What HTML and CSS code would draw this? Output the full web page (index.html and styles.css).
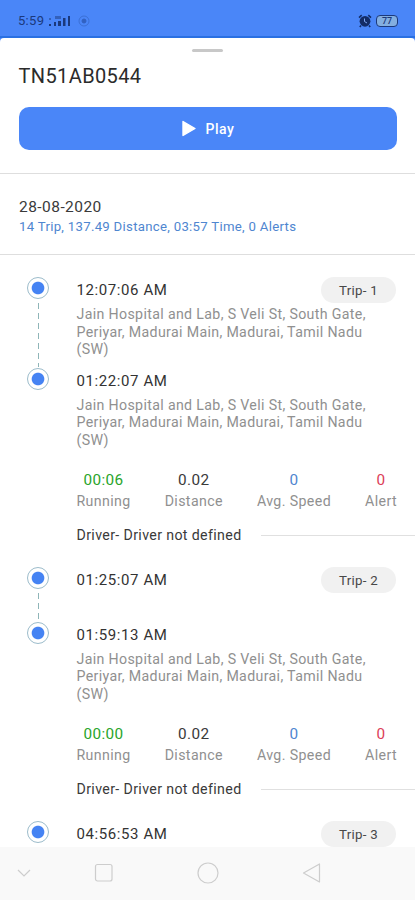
FILE: index.html
```html
<!DOCTYPE html>
<html lang="en">
<head>
<meta charset="utf-8">
<title>Trips</title>
<link rel="stylesheet" href="styles.css">
</head>
<body>
<div class="screen">
  <header class="status">
    <span class="clock">5:59</span>
    <svg class="signal" width="24" height="14" viewBox="0 0 24 14" fill="#1b397c">
      <rect x="1" y="4" width="2" height="2" opacity=".5"/><rect x="1" y="10" width="2" height="2"/>
      <rect x="6" y="8" width="2" height="4"/><rect x="7" y="2" width="6" height="3" opacity=".5"/>
      <rect x="10" y="7" width="3" height="5"/><rect x="15" y="4" width="2.5" height="8"/>
      <rect x="20" y="2" width="2" height="10"/>
    </svg>
    <svg class="ring" width="12" height="12" viewBox="0 0 12 12" fill="none" stroke="#2c59b4">
      <circle cx="6" cy="6" r="5" opacity=".5"/><circle cx="6" cy="6" r="2" fill="#2c59b4" opacity=".8"/>
    </svg>
    <svg class="alarm" width="14" height="14" viewBox="0 0 14 14">
      <circle cx="7" cy="7.3" r="5.4" fill="#132c67"/>
      <path d="M1 3.6 3.7 1.2M13 3.6 10.3 1.2M3 11.5 1.8 13M11 11.5 12.2 13" stroke="#132c67" stroke-width="1.6"/>
      <path d="M6.500 4.500V7.500L9 9" fill="none" stroke="#7fa6f2"/>
    </svg>
    <span class="battery">77</span>
  </header>
  <main class="sheet">
    <div class="handle"></div>
    <h1 class="vehicle">TN51AB0544</h1>
    <button class="play">
      <svg width="14" height="17" viewBox="0 0 14 17"><path d="M1 1.500 13 8.500 1 15.500Z" fill="#fff" stroke="#fff" stroke-width="1.400" stroke-linejoin="round"/></svg>
      <span>Play</span>
    </button>
    <section class="summary">
      <div class="date">28-08-2020</div>
      <div class="totals">14 Trip, 137.49 Distance, 03:57 Time, 0 Alerts</div>
    </section>
    <section class="trips">
      <article class="trip">
        <div class="stop start">
          <div class="rail"><i class="dot"></i><i class="dash"></i></div>
          <div class="info">
            <div class="head"><span class="time">12:07:06 AM</span><span class="pill">Trip- 1</span></div>
            <p class="address">Jain Hospital and Lab, S Veli St, South Gate,<br>Periyar, Madurai Main, Madurai, Tamil Nadu<br>(SW)</p>
          </div>
        </div>
        <div class="stop end">
          <div class="rail"><i class="dot"></i></div>
          <div class="info">
            <div class="head"><span class="time">01:22:07 AM</span></div>
            <p class="address">Jain Hospital and Lab, S Veli St, South Gate,<br>Periyar, Madurai Main, Madurai, Tamil Nadu<br>(SW)</p>
            <div class="stats">
              <div class="stat"><b class="green">00:06</b><span>Running</span></div>
              <div class="stat"><b>0.02</b><span>Distance</span></div>
              <div class="stat"><b class="blue">0</b><span>Avg. Speed</span></div>
              <div class="stat"><b class="red">0</b><span>Alert</span></div>
            </div>
            <div class="driver"><span>Driver- Driver not defined</span></div>
          </div>
        </div>
      </article>
      <article class="trip">
        <div class="stop start short">
          <div class="rail"><i class="dot"></i><i class="dash"></i></div>
          <div class="info">
            <div class="head"><span class="time">01:25:07 AM</span><span class="pill">Trip- 2</span></div>
          </div>
        </div>
        <div class="stop end">
          <div class="rail"><i class="dot"></i></div>
          <div class="info">
            <div class="head"><span class="time">01:59:13 AM</span></div>
            <p class="address">Jain Hospital and Lab, S Veli St, South Gate,<br>Periyar, Madurai Main, Madurai, Tamil Nadu<br>(SW)</p>
            <div class="stats">
              <div class="stat"><b class="green">00:00</b><span>Running</span></div>
              <div class="stat"><b>0.02</b><span>Distance</span></div>
              <div class="stat"><b class="blue">0</b><span>Avg. Speed</span></div>
              <div class="stat"><b class="red">0</b><span>Alert</span></div>
            </div>
            <div class="driver"><span>Driver- Driver not defined</span></div>
          </div>
        </div>
      </article>
      <article class="trip">
        <div class="stop">
          <div class="rail"><i class="dot"></i></div>
          <div class="info">
            <div class="head"><span class="time">04:56:53 AM</span><span class="pill">Trip- 3</span></div>
          </div>
        </div>
      </article>
    </section>
  </main>
  <nav class="navbar">
    <svg width="14" height="10" viewBox="0 0 14 10"><path d="M1 2 7 8 13 2"/></svg>
    <svg width="20" height="20" viewBox="0 0 20 20"><rect x="1.500" y="1.500" width="16.500" height="16.500" rx="2"/></svg>
    <svg width="22" height="22" viewBox="0 0 22 22"><circle cx="11" cy="11" r="10"/></svg>
    <svg width="20" height="22" viewBox="0 0 20 22"><path d="M17.500 2V20L1.500 11Z" stroke-linejoin="round"/></svg>
  </nav>
</div>
</body>
</html>
```
FILE: styles.css
```css
* { box-sizing: border-box; }
body { margin: 0; font-family: Roboto, sans-serif; background: #4a86f8; }
.screen { width: 415px; height: 900px; display: flex; flex-direction: column; overflow: hidden; }

.status {
  flex: none; height: 38px; padding: 5px 17px 0 18px;
  display: flex; align-items: center;
  background: #4a86f8; border-bottom: 2px solid #2a70e2; color: #1b397c;
}
.clock { width: 30px; font-size: 13px; letter-spacing: .3px; }
.ring { margin-left: 6px; }
.alarm { margin-left: auto; margin-right: 4px; }
.battery {
  width: 22px; height: 12px; border: 1.5px solid #1b397c; border-radius: 4px;
  background: #83aee0; font-size: 9px; line-height: 10px; text-align: center; font-weight: 500;
}

.sheet { flex: 1; min-height: 0; overflow: hidden; background: #fff; border-radius: 4px 4px 0 0; }
.handle { width: 31px; height: 3px; margin: 11px auto 0; background: #c8c8c8; border-radius: 2px; }
.vehicle { margin: 12px 0 0 18.5px; font-size: 20px; line-height: 24px; font-weight: 400; letter-spacing: .38px; color: #2b2b2b; }
.play {
  width: 378px; height: 43px; margin: 19px 0 0 19px; padding: 0;
  display: flex; align-items: center; justify-content: center; gap: 10px;
  border: 0; border-radius: 10px; background: #4a86f8; color: #fff;
  font: 500 14px/20px Roboto, sans-serif; letter-spacing: .5px;
}
.summary { height: 82px; margin-top: 23px; padding: 23px 19px 0; border-top: 1px solid #dedede; border-bottom: 1px solid #dedede; }
.date { font-size: 15.5px; line-height: 20px; letter-spacing: .45px; color: #3a3a3a; }
.totals { font-size: 13.2px; line-height: 20px; letter-spacing: .29px; color: #4f86d0; }

.trips { padding-top: 22px; }
.stop { display: flex; }
.rail { width: 76.5px; flex: none; display: flex; flex-direction: column; align-items: center; }
.start { height: 90.5px; }
.start.short { height: 55px; }
.end { height: 199px; }
.dot {
  width: 22px; height: 22px; flex: none; border: 1px solid #9cbccb; border-radius: 50%;
  background: radial-gradient(circle, #4583f3 5.8px, #fff 6.8px);
}
.dash { flex: 1; width: 1px; margin: 4px 0 1px; background: repeating-linear-gradient(#8fb5b8 0 6px, transparent 6px 10px); }
.info { flex: 1; }
.head { height: 26px; padding-right: 19px; display: flex; align-items: center; justify-content: space-between; }
.time { font-size: 15px; letter-spacing: .6px; color: #333; }
.pill { width: 75px; height: 26px; border-radius: 13px; background: #f1f1f1; text-align: center; font-size: 13.3px; line-height: 27px; letter-spacing: .3px; color: #484848; }
.address { margin: 3px 0 0; font-size: 14.2px; line-height: 17.5px; letter-spacing: .34px; color: #909090; white-space: nowrap; }
.stats { margin: 21px 18px 0 0; display: flex; justify-content: space-between; }
.stat { display: flex; flex-direction: column; align-items: center; font-size: 14.2px; line-height: 21px; letter-spacing: .38px; color: #909090; }
.stat b { font-size: 15.3px; font-weight: 400; color: #3a3a3a; }
.stat .green { color: #2aa52a; }
.stat .blue { color: #4f86d0; }
.stat .red { color: #dc4058; }
.driver { margin-top: 13px; display: flex; align-items: center; font-size: 14.2px; line-height: 20px; letter-spacing: .36px; color: #3a3a3a; }
.driver::after { content: ""; flex: 1; height: 1px; margin-left: 19px; background: #e0e0e0; }

.navbar {
  flex: none; height: 53px; padding-bottom: 2px;
  display: grid; grid-template-columns: 48px 112px 96px 112px; place-items: center;
  background: #f9f9f9;
}
.navbar svg { fill: none; stroke: #cdcdcd; stroke-width: 1.2; }
```
